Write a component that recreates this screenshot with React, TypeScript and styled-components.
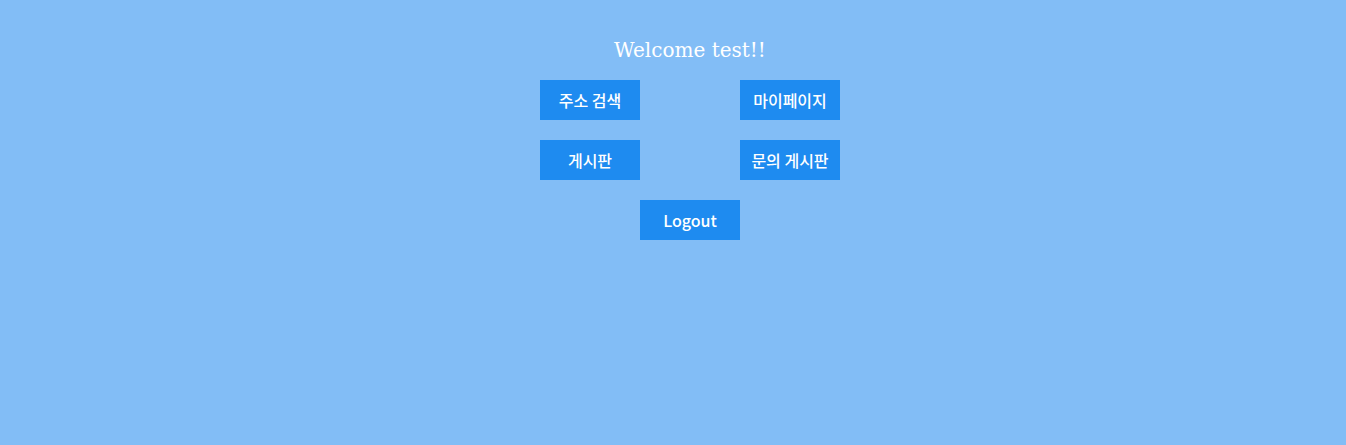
import React from "react";
import styled, { createGlobalStyle } from "styled-components";

const Global = createGlobalStyle`
  html, body { margin: 0; padding: 0; background: #82bdf6; }
  body { width: 1346px; height: 445px; overflow: hidden; }
`;

const Page = styled.div`
  display: flex;
  justify-content: center;
  padding-left: 34px;
  padding-top: 36px;
  box-sizing: border-box;
  height: 445px;
`;

const Panel = styled.div`
  display: flex;
  flex-direction: column;
  align-items: center;
  width: 300px;
`;

const Title = styled.h1`
  margin: 0 0 16px;
  font-family: "DejaVu Serif", serif;
  font-weight: normal;
  font-size: 20px;
  line-height: 28px;
  color: #ffffff;
`;

const Grid = styled.div`
  display: grid;
  grid-template-columns: repeat(3, 100px);
  row-gap: 20px;
`;

const Button = styled.button<{ $col: number }>`
  grid-column: ${(p) => p.$col};
  width: 100px;
  height: 40px;
  border: none;
  padding: 0;
  background: #1e8bf0;
  color: #ffffff;
  font-family: "Noto Sans CJK KR", "Noto Sans", sans-serif;
  font-weight: 500;
  font-size: 16px;
  cursor: pointer;
`;

export default function App() {
  return (
    <>
      <Global />
      <Page>
        <Panel>
          <Title>Welcome test!!</Title>
          <Grid>
            <Button $col={1}>주소 검색</Button>
            <Button $col={3}>마이페이지</Button>
            <Button $col={1}>게시판</Button>
            <Button $col={3}>문의 게시판</Button>
            <Button $col={2}>Logout</Button>
          </Grid>
        </Panel>
      </Page>
    </>
  );
}
